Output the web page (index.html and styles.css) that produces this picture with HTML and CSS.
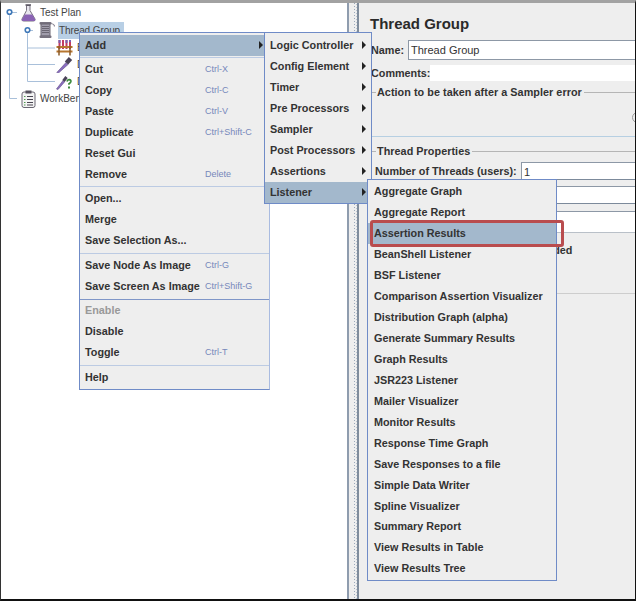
FILE: index.html
```html
<!DOCTYPE html>
<html lang="en">
<head>
    <meta charset="UTF-8">
    <meta name="viewport" content="width=device-width, initial-scale=1.0">
    <title>Thread Group</title>
    <link rel="stylesheet" href="styles.css">
</head>
<body>

<div class="window">

    <!-- Tree on the left -->
    <div class="tree">
        <svg class="tree-lines" width="60" height="104" viewBox="0 0 60 104">
            <path d="M9.500 9v86.500H17M9.500 9.500H17" fill="none" stroke="#a9c0da"/>
            <path d="M27.500 27v51.500H55M27.500 27.500H33M27.500 45H55M27.500 61.500H55" fill="none" stroke="#a9c0da"/>
            <circle cx="9.500" cy="9" r="2.300" fill="#fff" stroke="#3f78b8" stroke-width="1.600"/>
            <circle cx="27.500" cy="27" r="2.300" fill="#fff" stroke="#3f78b8" stroke-width="1.600"/>
        </svg>

        <div class="node">
            <svg class="node-icon" width="15" height="18" viewBox="0 0 15 18">
                <path d="M5.500 1.500h3.500v5l5 8.500q.6 2-1.500 2H2.500q-2.100 0-1.500-2l4.500-8.500z" fill="#e8e6ee" stroke="#77727f"/>
                <path d="M3.800 10.500h7.400l3 5q.2 1.500-1.500 1.500H2.300q-1.700 0-1.500-1.500z" fill="#8a62b4"/>
                <path d="M4.500 1h5.500" stroke="#55505c" stroke-width="1.500"/>
            </svg>
            <span class="node-label">Test Plan</span>
        </div>

        <div class="node node-thread">
            <svg class="node-icon" width="16" height="18" viewBox="0 0 16 18">
                <rect x="0.500" y="1" width="12" height="2.500" rx="1" fill="#77727f"/>
                <rect x="2" y="3" width="9" height="12" fill="#a09cab" stroke="#6a6672"/>
                <path d="M3 5.500h7M3 7.500h7M3 9.500h7M3 11.500h7" stroke="#6a6672"/>
                <rect x="0.500" y="14.500" width="12" height="2.500" rx="1" fill="#77727f"/>
                <path d="M12 2.500q3.500.5 3.500 3" fill="none" stroke="#8a8693" stroke-width="1.200"/>
            </svg>
            <span class="node-label node-selected">Thread Group</span>
        </div>

        <div class="node node-child">
            <svg class="node-icon" width="17" height="17" viewBox="0 0 17 17">
                <path d="M3.500 1v9M7 1v9M10.500 1v9M14 1v9" stroke="#c23b63" stroke-width="2"/>
                <path d="M3.500 1v3M10.500 1v3M14 1v2" stroke="#7a5fb0" stroke-width="2"/>
                <path d="M0.500 8h16M0.500 12.500h16" stroke="#b7762f" stroke-width="2"/>
                <path d="M3 7v9.500M14 7v9.500" stroke="#8a5a26" stroke-width="1.500"/>
            </svg>
            <span class="node-label">Bzm</span>
        </div>

        <div class="node node-child">
            <svg class="node-icon" width="17" height="17" viewBox="0 0 17 17">
                <path d="M0.800 16.500 10 6.500l2 2-9.500 8.500z" fill="#8a6cc0" stroke="#6b5a90" stroke-width=".7"/>
                <path d="M10.500 7 14.500 2.500" stroke="#4a4358" stroke-width="4.500"/>
            </svg>
            <span class="node-label">Debug</span>
        </div>

        <div class="node node-child">
            <svg class="node-icon" width="17" height="17" viewBox="0 0 17 17">
                <path d="M0.500 16 7 7.500l1.500 1.500-6.500 7.500z" fill="#8a6cc0" stroke="#6b5a90" stroke-width=".7"/>
                <path d="M7.500 8 10.500 4" stroke="#4a4358" stroke-width="3"/>
                <path d="M11 8.500q.5-2 2.300-1.800 1.900.3 1.500 2-.3 1-1.800 2v1" fill="none" stroke="#3c8a3c" stroke-width="1.800"/>
                <rect x="12" y="13.500" width="2" height="2" fill="#3c8a3c"/>
            </svg>
            <span class="node-label">Debug</span>
        </div>

        <div class="node">
            <svg class="node-icon" width="15" height="18" viewBox="0 0 15 18">
                <rect x="1" y="2" width="13" height="15.500" rx="2" fill="#f4f4f4" stroke="#6a6672"/>
                <rect x="4.500" y="0.500" width="6" height="3" fill="#55505c"/>
                <path d="M6 6.500h6M6 9.500h6M6 12.500h6M6 15h6" stroke="#4a4652"/>
                <path d="M3 6.500h1.500M3 9.500h1.500M3 12.500h1.500M3 15h1.500" stroke="#4f9a4f"/>
            </svg>
            <span class="node-label">WorkBench</span>
        </div>
    </div>

    <!-- Divider -->
    <div class="splitter"><div class="splitter-dots"></div></div>

    <!-- Thread Group form -->
    <div class="form">
        <h1 class="form-title">Thread Group</h1>

        <div class="name-row">
            <label class="name-label">Name:</label>
            <div class="input input-name">Thread Group</div>
        </div>
        <div class="comments-row">
            <label>Comments:</label>
            <div class="comments-input"></div>
        </div>

        <div class="group group-error">
            <div class="legend"><span>Action to be taken after a Sampler error</span></div>
            <div class="radio-line"><span class="radio"></span></div>
        </div>

        <div class="group group-props">
            <div class="legend"><span>Thread Properties</span></div>
            <div class="prop-row">
                <label>Number of Threads (users):</label>
                <div class="input input-prop">1</div>
            </div>
            <div class="prop-row prop-second">
                <div class="input input-prop"></div>
            </div>
            <div class="prop-row prop-third">
                <div class="input input-prop input-loop"></div>
            </div>
            <div class="delay-line">Delay Thread creation until needed</div>
            <div class="group-end"></div>
        </div>
    </div>

    <!-- Context menu -->
    <div class="menu menu-main">
        <div class="item item-on"><span class="item-label">Add</span><i class="arrow"></i></div>
        <div class="sep"></div>
        <div class="item"><span class="item-label">Cut</span><span class="key">Ctrl-X</span></div>
        <div class="item"><span class="item-label">Copy</span><span class="key">Ctrl-C</span></div>
        <div class="item"><span class="item-label">Paste</span><span class="key">Ctrl-V</span></div>
        <div class="item"><span class="item-label">Duplicate</span><span class="key">Ctrl+Shift-C</span></div>
        <div class="item"><span class="item-label">Reset Gui</span></div>
        <div class="item"><span class="item-label">Remove</span><span class="key">Delete</span></div>
        <div class="sep"></div>
        <div class="item"><span class="item-label">Open...</span></div>
        <div class="item"><span class="item-label">Merge</span></div>
        <div class="item"><span class="item-label">Save Selection As...</span></div>
        <div class="sep sep-wide"></div>
        <div class="item"><span class="item-label">Save Node As Image</span><span class="key">Ctrl-G</span></div>
        <div class="item"><span class="item-label">Save Screen As Image</span><span class="key">Ctrl+Shift-G</span></div>
        <div class="sep sep-low sep-dark"></div>
        <div class="item item-off"><span class="item-label">Enable</span></div>
        <div class="item"><span class="item-label">Disable</span></div>
        <div class="item"><span class="item-label">Toggle</span><span class="key">Ctrl-T</span></div>
        <div class="sep sep-wide"></div>
        <div class="item"><span class="item-label">Help</span></div>
    </div>

    <div class="menu menu-add">
        <div class="item"><span class="item-label">Logic Controller</span><i class="arrow"></i></div>
        <div class="item"><span class="item-label">Config Element</span><i class="arrow"></i></div>
        <div class="item"><span class="item-label">Timer</span><i class="arrow"></i></div>
        <div class="item"><span class="item-label">Pre Processors</span><i class="arrow"></i></div>
        <div class="item"><span class="item-label">Sampler</span><i class="arrow"></i></div>
        <div class="item"><span class="item-label">Post Processors</span><i class="arrow"></i></div>
        <div class="item"><span class="item-label">Assertions</span><i class="arrow"></i></div>
        <div class="item item-on"><span class="item-label">Listener</span><i class="arrow"></i></div>
    </div>

    <div class="menu menu-listener">
        <div class="item"><span class="item-label">Aggregate Graph</span></div>
        <div class="item"><span class="item-label">Aggregate Report</span></div>
        <div class="item item-on"><span class="item-label">Assertion Results</span><div class="callout"></div></div>
        <div class="item"><span class="item-label">BeanShell Listener</span></div>
        <div class="item"><span class="item-label">BSF Listener</span></div>
        <div class="item"><span class="item-label">Comparison Assertion Visualizer</span></div>
        <div class="item"><span class="item-label">Distribution Graph (alpha)</span></div>
        <div class="item"><span class="item-label">Generate Summary Results</span></div>
        <div class="item"><span class="item-label">Graph Results</span></div>
        <div class="item"><span class="item-label">JSR223 Listener</span></div>
        <div class="item"><span class="item-label">Mailer Visualizer</span></div>
        <div class="item"><span class="item-label">Monitor Results</span></div>
        <div class="item"><span class="item-label">Response Time Graph</span></div>
        <div class="item"><span class="item-label">Save Responses to a file</span></div>
        <div class="item"><span class="item-label">Simple Data Writer</span></div>
        <div class="item"><span class="item-label">Spline Visualizer</span></div>
        <div class="item"><span class="item-label">Summary Report</span></div>
        <div class="item"><span class="item-label">View Results in Table</span></div>
        <div class="item"><span class="item-label">View Results Tree</span></div>
    </div>

</div>

</body>
</html>
```

FILE: styles.css
```css
body {
    margin: 0;
    background-color: #fff;
    font-family: "Liberation Sans", Arial, sans-serif;
    color: #333;
}

.window {
    position: relative;
    display: flex;
    width: 636px;
    height: 601px;
    box-sizing: border-box;
    border-top: 3px solid #a2a2a2;
    border-left: 1px solid #333;
    border-right: 1px solid #111;
    border-bottom: 2px solid #111;
    overflow: hidden;
}

/* Tree */
.tree {
    position: relative;
    flex: none;
    width: 346px;
    padding-top: 1px;
    background-color: #fff;
    border-right: 2px solid #8f9cae;
}

.tree-lines {
    position: absolute;
    top: 0;
    left: -1px;
}

.node {
    display: flex;
    align-items: center;
    height: 17px;
    padding-left: 20px;
    font-size: 10px;
    color: #444;
}

.node-thread {
    height: 18px;
    padding-left: 38px;
}

.node-child {
    padding-left: 55px;
}

.node-icon {
    flex: none;
    margin-right: 4px;
}

.node-thread .node-icon {
    margin-right: 3px;
}

.node-selected {
    padding: 3px 4px 3px 1px;
    background-color: #b8cfe5;
    letter-spacing: -0.1px;
}

/* Divider */
.splitter {
    flex: none;
    width: 8px;
    background-color: #eee;
    border-right: 2px solid #7f8c9c;
}

.splitter-dots {
    width: 3px;
    height: 100%;
    margin-left: 5px;
    background-image:
        linear-gradient(#9aa8ba 1px, transparent 1px),
        linear-gradient(#b9c4d2 1px, transparent 1px);
    background-size: 1px 3px, 1px 3px;
    background-position: 0 0, 2px 1px;
    background-repeat: repeat-y;
}

/* Form */
.form {
    flex: 1;
    min-width: 0;
    padding-left: 11px;
    background-color: #eee;
    font-size: 10.8px;
    font-weight: bold;
    overflow: hidden;
}

.form-title {
    height: 37px;
    margin: 0;
    padding-top: 11px;
    box-sizing: border-box;
    font-size: 15px;
    line-height: 20px;
    color: #2a2a2a;
}

.name-row {
    display: flex;
    align-items: center;
    height: 20px;
}

.name-label {
    flex: none;
    width: 38px;
    padding-left: 1px;
    box-sizing: border-box;
}

.input {
    flex: 1;
    height: 100%;
    box-sizing: border-box;
    padding-left: 2px;
    background-color: #fff;
    border-top: 1px solid #8d98a6;
    border-left: 1px solid #8d98a6;
    border-bottom: 1px solid #8d98a6;
    font-weight: normal;
    font-size: 11px;
    line-height: 18px;
}

.comments-row {
    display: flex;
    align-items: center;
    height: 16px;
    margin-top: 5px;
}

.comments-row label {
    flex: none;
    width: 60px;
    padding-left: 1px;
    box-sizing: border-box;
}

.comments-input {
    flex: 1;
    height: 100%;
    background-color: #fff;
}

.group {
    margin-left: 2px;
}

.group-error {
    height: 51px;
    margin-top: 4px;
    border-bottom: 1px solid #b6cfe2;
}

.legend {
    display: flex;
    align-items: center;
    height: 14px;
}

.legend::before {
    content: "";
    width: 4px;
    border-top: 1px solid #b5b5b5;
}

.legend::after {
    content: "";
    flex: 1;
    margin-left: 2px;
    border-top: 1px solid #b5b5b5;
}

.legend span {
    margin-left: 1px;
    letter-spacing: 0.05px;
    white-space: nowrap;
}

.radio-line {
    display: flex;
    justify-content: flex-end;
    margin-top: 13px;
    margin-right: -8px;
}

.radio {
    width: 9px;
    height: 9px;
    border: 1px solid #9a9a9a;
    border-radius: 50%;
}

.group-props {
    padding-top: 7px;
}

.prop-row {
    display: flex;
    align-items: center;
    height: 18px;
    margin-top: 4px;
    padding-left: 3px;
}

.prop-row label {
    flex: none;
    width: 146px;
    white-space: nowrap;
}

.prop-second {
    margin-top: 6px;
    padding-left: 149px;
}

.prop-third {
    height: 22px;
    margin-top: 7px;
    padding-left: 149px;
}

.input-prop {
    border-bottom-color: #7c8a9b;
}

.input-loop {
    border-bottom-color: #b9c0c8;
}

.delay-line {
    margin-top: 10px;
    padding-left: 21px;
    line-height: 14px;
    white-space: nowrap;
}

.group-end {
    height: 36px;
    border-bottom: 1px solid #cdcdcd;
}

/* Popup menus */
.menu {
    position: absolute;
    box-sizing: border-box;
    background-color: #eee;
    border: 1px solid #6f8bc7;
    font-size: 10.8px;
    font-weight: bold;
}

.menu-main {
    top: 29px;
    left: 78px;
    width: 191px;
    padding: 2px 0 1px;
    border-right-color: #a9bbe0;
}

.menu-add {
    top: 29px;
    left: 263px;
    width: 108px;
    padding-top: 2px;
}

.menu-listener {
    top: 176px;
    left: 366px;
    width: 190px;
    padding: 1px 0;
}

.item {
    position: relative;
    display: flex;
    align-items: center;
    height: 21px;
    box-sizing: border-box;
    padding: 0 0 2px 5px;
    white-space: nowrap;
}

.menu-listener .item {
    height: 20.95px;
    padding-bottom: 0;
    padding-left: 6px;
}

.item-on {
    background-color: #a3b8cc;
}

.item-off {
    color: #999;
}

.item-label {
    flex: none;
    width: 120px;
}

.menu-add .item-label {
    width: 92px;
}

.menu-listener .item-label {
    width: auto;
}

.key {
    font-size: 9px;
    font-weight: normal;
    color: #7688bb;
}

.arrow {
    position: absolute;
    top: 6px;
    right: 5px;
    width: 0;
    height: 0;
    border-top: 4px solid transparent;
    border-bottom: 4px solid transparent;
    border-left: 4px solid #222;
}

.menu-main .arrow {
    right: 6px;
}

.sep {
    height: 1px;
    margin: 1px 0;
    background-color: #bccbe3;
}

.sep-low {
    margin: 2px 0 0;
}

.sep-dark {
    background-color: #7f96c8;
}

.sep-wide {
    margin: 2px 0 1px;
}

/* Red box drawn around the menu entry */
.callout {
    position: absolute;
    top: -3px;
    left: 2px;
    right: -8px;
    bottom: -3px;
    border: 3px solid #b94c4e;
    border-radius: 3px;
}
```
